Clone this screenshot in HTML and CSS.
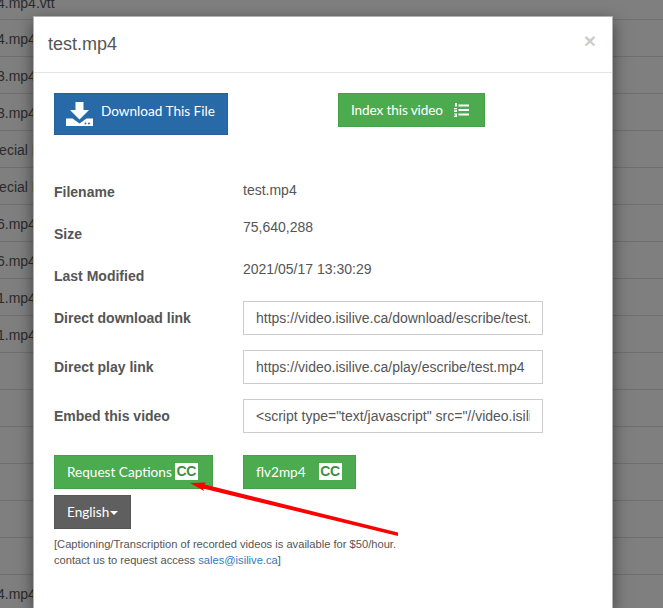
FILE: index.html
```html
<!DOCTYPE html>
<html lang="en">
<head>
<meta charset="utf-8">
<title>test.mp4</title>
<link rel="stylesheet" href="styles.css">
</head>
<body>
<ul class="file-list">
  <li class="clip-first">4.mp4.vtt</li>
  <li>4.mp4</li>
  <li>3.mp4</li>
  <li>3.mp4</li>
  <li class="clip-more">Special L</li>
  <li class="clip-more">Special L</li>
  <li>6.mp4</li>
  <li>6.mp4</li>
  <li>1.mp4</li>
  <li>1.mp4</li>
  <li></li>
  <li></li>
  <li></li>
  <li></li>
  <li></li>
  <li></li>
  <li class="row-last">4.mp4</li>
</ul>
<div class="modal">
  <header class="modal-header">
    <h4 class="modal-title">test.mp4</h4>
    <span class="close">×</span>
  </header>
  <div class="modal-body">
    <div class="actions">
      <a class="btn btn-primary btn-download">
        <svg class="icon-download" viewBox="0 0 27 24" width="27" height="24" aria-hidden="true">
          <path fill="#fff" d="M9.500 0h8v8H23l-9.500 9.500L4 8h5.500z"/>
          <path fill="#fff" d="M0 16.500h6.500l7 5 7-5H27V24H0z"/>
          <circle cx="19.500" cy="21.500" r="1" fill="#286aa8"/>
          <circle cx="23" cy="21.500" r="1" fill="#286aa8"/>
        </svg>
        <span>Download This File</span>
      </a>
      <a class="btn btn-success btn-index">
        <span>Index this video</span>
        <svg class="icon-list" viewBox="0 0 15 14" width="15" height="14" aria-hidden="true">
          <path fill="#fff" d="M4.500 1.500H15v2H4.500zM4.500 6H15v2H4.500zM4.500 10.500H15v2H4.500z"/>
          <path fill="#fff" d="M1 0h2v3.500H1zM0 5h3v1.200H1.500V7H3v2H0V7.500h1.500V6.500H0zM0 10.500h3V14H0v-1h1.600v-.5H.6v-.8h1v-.4H0z"/>
        </svg>
      </a>
    </div>
    <div class="row row-name">
      <div class="label label-name">Filename</div>
      <div class="value">test.mp4</div>
    </div>
    <div class="row row-info">
      <div class="label">Size</div>
      <div class="value">75,640,288</div>
    </div>
    <div class="row row-info">
      <div class="label">Last Modified</div>
      <div class="value">2021/05/17 13:30:29</div>
    </div>
    <div class="row row-input">
      <div class="label">Direct download link</div>
      <input class="field" type="text" value="https://video.isilive.ca/download/escribe/test.mp4">
    </div>
    <div class="row row-input">
      <div class="label">Direct play link</div>
      <input class="field" type="text" value="https://video.isilive.ca/play/escribe/test.mp4">
    </div>
    <div class="row row-input">
      <div class="label">Embed this video</div>
      <input class="field" type="text" value="&lt;script type=&quot;text/javascript&quot; src=&quot;//video.isilive.ca/embed.js&quot;&gt;">
    </div>
    <div class="caption-actions">
      <a class="btn btn-success btn-request"><span>Request Captions</span><span class="cc">CC</span></a>
      <a class="btn btn-success btn-flv"><span>flv2mp4</span><span class="cc">CC</span></a>
    </div>
    <a class="btn btn-dark btn-lang">English<span class="caret"></span></a>
    <p class="note">[Captioning/Transcription of recorded videos is available for $50/hour.<br>contact us to request access <a class="mail">sales@isilive.ca</a>]</p>
  </div>
</div>
<svg class="arrow" viewBox="0 0 663 608" width="663" height="608" aria-hidden="true">
  <path fill="#fe0000" d="M398 532.500L398 536L203 488.500L204 491L190 483L206 482.500L204.500 484.500z"/>
</svg>
</body>
</html>
```

FILE: styles.css
```css
* { box-sizing: border-box; }
html, body { margin: 0; height: 100%; }
body {
  width: 663px;
  height: 608px;
  overflow: hidden;
  position: relative;
  background: #7f7f7f;
  font-family: "Liberation Sans", Arial, sans-serif;
  font-size: 14px;
  color: #555;
}
.file-list {
  list-style: none;
  margin: -17px 0 0;
  padding: 0;
}
.file-list li {
  height: 37px;
  border-bottom: 1px solid #6f6f6f;
  font-size: 14px;
  line-height: 39px;
  color: #2b2b2b;
  white-space: nowrap;
  margin-left: -3px;
}
.file-list li.clip-first { line-height: 41px; }
.file-list li.clip-more { margin-left: -18px; }
.file-list li.row-last { height: 33px; border-bottom: 0; }
.modal {
  position: absolute;
  left: 33px;
  top: 16px;
  width: 580px;
  height: 592px;
  background: #fff;
  border: 1px solid rgba(0, 0, 0, .3);
  border-bottom: 0;
  box-shadow: 0 5px 15px rgba(0, 0, 0, .5);
}
.modal-header {
  height: 56px;
  border-bottom: 1px solid #e5e5e5;
  padding: 14px 15px 0 15px;
  display: flex;
  justify-content: space-between;
}
.modal-title {
  margin: 0;
  font-size: 18px;
  font-weight: 400;
  line-height: 26px;
  color: #555;
  margin-left: -1px;
}
.close {
  font-size: 21px;
  font-weight: 700;
  line-height: 21px;
  color: #000;
  opacity: .2;
  margin: -1px 1px 0 0;
}
.modal-body { padding: 20px; }
.actions {
  display: flex;
  align-items: flex-start;
  margin-bottom: 45px;
}
.btn {
  display: inline-flex;
  align-items: center;
  height: 34px;
  padding-bottom: 1px;
  border: 1px solid transparent;
  font-family: Lato, sans-serif;
  font-size: 13.6px;
  color: #fff;
  white-space: nowrap;
}
.btn-primary { background: #286aa8; border-color: #245f98; }
.btn-success { background: #4cab4f; border-color: #46a049; }
.btn-dark { background: #5f5f5f; border-color: #555; }
.btn-download {
  width: 174px;
  height: 42px;
  padding: 0 0 6px 11px;
  gap: 8px;
  margin-right: 110px;
}
.icon-download { margin-top: 6px; }
.btn-index {
  width: 147px;
  padding: 0 0 1px 12px;
  gap: 11px;
  letter-spacing: -.12px;
}
.row { display: flex; align-items: flex-start; }
.row-name { height: 37px; }
.row-info { height: 42px; }
.row-input { height: 49px; }
.label {
  width: 189px;
  flex: none;
  padding-top: 7px;
  font-weight: 700;
  line-height: 20px;
  color: #555;
}
.label-name { padding-top: 2px; }
.value { line-height: 20px; color: #555; }
.field {
  width: 300px;
  height: 34px;
  border: 1px solid #ccc;
  padding: 6px 12px;
  font-family: "Liberation Sans", Arial, sans-serif;
  font-size: 14px;
  color: #555;
  background: #fff;
  border-radius: 0;
}
.caption-actions {
  display: flex;
  margin-top: 7px;
  margin-bottom: 6px;
}
.btn-request {
  width: 159px;
  padding-left: 12px;
  gap: 3px;
  margin-right: 30px;
}
.btn-flv {
  width: 113px;
  padding-left: 12px;
  gap: 13px;
}
.cc {
  display: inline-block;
  width: 23px;
  height: 17px;
  background: #fff;
  color: #3f8f42;
  font-family: "Liberation Sans", Arial, sans-serif;
  font-weight: 700;
  font-size: 14px;
  line-height: 17px;
  letter-spacing: -.3px;
  text-align: center;
}
.btn-lang {
  width: 77px;
  padding-left: 12px;
}
.caret {
  width: 0;
  height: 0;
  margin-left: 1px;
  margin-top: 2px;
  border-top: 4px solid #fff;
  border-left: 4px solid transparent;
  border-right: 4px solid transparent;
}
.note {
  margin: 7px 0 0;
  font-size: 11.15px;
  line-height: 16px;
  color: #555;
}
.mail { color: #337ab7; }
.arrow {
  position: absolute;
  left: 0;
  top: 0;
  pointer-events: none;
}
```
